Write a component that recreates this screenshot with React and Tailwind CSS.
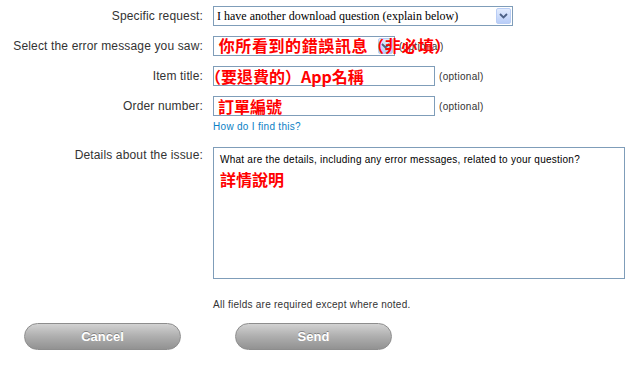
const Arrow = ({ className }) => (
  <span
    className={`flex items-center justify-center rounded-[2px] border border-[#b9cdf5] bg-gradient-to-b from-[#e3ecfd] to-[#b8cdf8] ${className}`}
  >
    <svg width="9" height="6" viewBox="0 0 9 6">
      <path d="M1 1 L4.5 4.5 L8 1" fill="none" stroke="#4d6185" strokeWidth="1.8" />
    </svg>
  </span>
);

const Label = ({ children, top }) => (
  <div
    className={`text-right text-[12px] tracking-[0.15px] text-[#333] font-['Liberation_Sans',Arial,sans-serif] ${
      top ? "leading-[16px]" : "self-center"
    }`}
  >
    {children}
  </div>
);

const Red = ({ children, className = "" }) => (
  <span
    className={`absolute whitespace-nowrap text-[16px] font-bold leading-none text-[#ff0000] font-['Noto_Sans_CJK_TC','Noto_Sans',sans-serif] ${className}`}
  >
    {children}
  </span>
);

const Optional = () => (
  <span className="ml-[4px] text-[10px] tracking-[0.3px] text-[#333] font-['Liberation_Sans',Arial,sans-serif]">
    (optional)
  </span>
);

export default function App() {
  return (
    <div className="h-[368px] w-[640px] bg-white pt-[6px] font-['Liberation_Sans',Arial,sans-serif]">
      <div className="grid grid-cols-[203px_1fr] gap-x-[10px]">
        <Label>Specific request:</Label>
        <div className="flex h-[20px] w-[300px] items-center justify-between border border-[#7f9db9] pl-[3px] pr-[1px]">
          <span className="text-[12px] text-black font-['Liberation_Serif','Times_New_Roman',serif]">
            I have another download question (explain below)
          </span>
          <Arrow className="h-[16px] w-[15px]" />
        </div>

        <div className="col-span-2 h-[10px]" />

        <Label>Select the error message you saw:</Label>
        <div className="flex h-[20px] items-center">
          <div className="relative flex h-[20px] w-[182px] items-center justify-end border border-[#7f9db9] pr-[1px]">
            <Arrow className="h-[16px] w-[15px]" />
          </div>
          <Optional />
          <div className="relative">
            <Red className="left-[-225px] top-[-9px] tracking-[0.6px]">
              你所看到的錯誤訊息（非必填）
            </Red>
          </div>
        </div>

        <div className="col-span-2 h-[10px]" />

        <Label>Item title:</Label>
        <div className="flex h-[20px] items-center">
          <div className="relative h-[20px] w-[222px] border border-[#7f9db9]">
            <Red className="left-[-9px] top-[1px]">（要退費的）App名稱</Red>
          </div>
          <Optional />
        </div>

        <div className="col-span-2 h-[10px]" />

        <Label>Order number:</Label>
        <div className="flex h-[20px] items-center">
          <div className="relative h-[20px] w-[222px] border border-[#7f9db9]">
            <Red className="left-[4px] top-[1px]">訂單編號</Red>
          </div>
          <Optional />
        </div>

        <div />
        <a className="mt-[5px] text-[10px] leading-[12px] tracking-[0.3px] text-[#0a80c5]">
          How do I find this?
        </a>

        <div className="col-span-2 h-[14px]" />

        <Label top>Details about the issue:</Label>
        <div className="h-[132px] w-[412px] border border-[#7f9db9] px-[6px] pt-[6px]">
          <div className="text-[10px] leading-[12px] tracking-[0.25px] text-black">
            What are the details, including any error messages, related to your question?
          </div>
          <div className="mt-[5px] text-[16px] font-bold leading-none text-[#ff0000] font-['Noto_Sans_CJK_TC','Noto_Sans',sans-serif]">
            詳情說明
          </div>
        </div>

        <div />
        <div className="mt-[20px] text-[10px] leading-[12px] tracking-[0.25px] text-[#333]">
          All fields are required except where noted.
        </div>
      </div>

      <div className="mt-[12px] flex gap-[54px] pl-[24px]">
        {["Cancel", "Send"].map((t) => (
          <button
            key={t}
            className="h-[27px] w-[157px] rounded-full border border-[#8d8d8d] bg-gradient-to-b from-[#d2d2d2] via-[#aeaeae] to-[#929292] text-[13px] font-bold text-white [text-shadow:0_-1px_0_rgba(0,0,0,0.3)]"
          >
            {t}
          </button>
        ))}
      </div>
    </div>
  );
}
